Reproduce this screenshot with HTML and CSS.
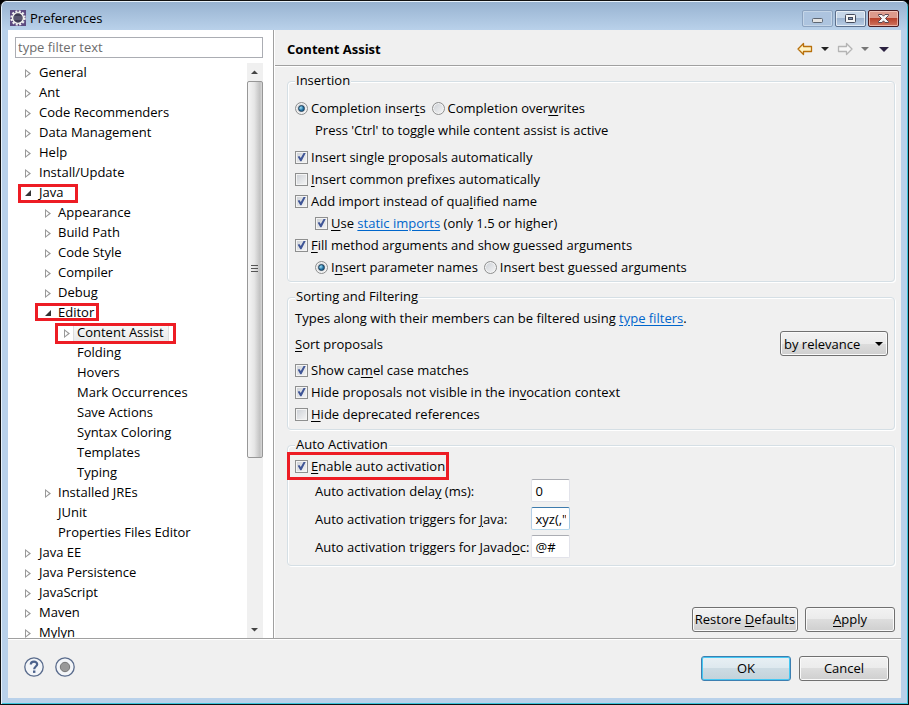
FILE: index.html
```html
<!DOCTYPE html>
<html lang="en">

<head>
    <meta charset="utf-8">
    <title>Preferences</title>
    <link rel="stylesheet" href="styles.css">
</head>

<body>
    <div class="window">
        <div class="title-bar">
            <svg class="app-icon" width="16" height="16" viewBox="0 0 16 16">
                <rect width="16" height="16" fill="#5d4a80"/>
                <circle cx="8" cy="8" r="6.5" fill="none" stroke="#eee" stroke-width="2.4" stroke-dasharray="2 1.4"/>
                <circle cx="8" cy="8" r="5.4" fill="#3e3a52" stroke="#f4f4f0" stroke-width="1.4"/>
                <path d="M4 7h8M4 9h8" stroke="#77738c"/>
            </svg>
            <span class="title">Preferences</span>
            <div class="window-buttons">
                <button type="button" class="win-btn win-min" aria-label="Minimize">
                    <svg width="29" height="15"><rect x="9.500" y="7.500" width="10" height="4" rx="1" fill="#e4e4e4" stroke="#5d6672"/></svg>
                </button>
                <button type="button" class="win-btn" aria-label="Maximize">
                    <svg width="29" height="15"><rect x="9.500" y="3.500" width="10" height="8" rx="1" fill="#f5f5f5" stroke="#454b5c"/><rect x="12.500" y="6.500" width="4" height="2" fill="#7f95b5" stroke="#454b5c"/></svg>
                </button>
                <button type="button" class="win-btn win-close" aria-label="Close">
                    <svg width="29" height="15"><path d="M9.500 3.500h3.500l1.500 1.700 1.500-1.700h3.500v1l-3 3 3 3v1h-3.500l-1.500-1.700-1.500 1.700H9.500v-1l3-3-3-3z" fill="#f5f5f5" stroke="#5a4650"/></svg>
                </button>
            </div>
        </div>

        <div class="client">
            <div class="main">
                <div class="sidebar">
                    <input type="text" class="filter" placeholder="type filter text" aria-label="Filter">
                    <div class="tree-area">
                        <ul class="tree">
                            <li class="closed"><span>General</span></li>
                            <li class="closed"><span>Ant</span></li>
                            <li class="closed"><span>Code Recommenders</span></li>
                            <li class="closed"><span>Data Management</span></li>
                            <li class="closed"><span>Help</span></li>
                            <li class="closed"><span>Install/Update</span></li>
                            <li class="open"><span>Java</span><i class="mark mark-java"></i>
                                <ul>
                                    <li class="closed"><span>Appearance</span></li>
                                    <li class="closed"><span>Build Path</span></li>
                                    <li class="closed"><span>Code Style</span></li>
                                    <li class="closed"><span>Compiler</span></li>
                                    <li class="closed"><span>Debug</span></li>
                                    <li class="open"><span>Editor</span><i class="mark mark-editor"></i>
                                        <ul>
                                            <li class="closed"><span class="selected">Content Assist</span><i class="mark mark-assist"></i></li>
                                            <li><span>Folding</span></li>
                                            <li><span>Hovers</span></li>
                                            <li><span>Mark Occurrences</span></li>
                                            <li><span>Save Actions</span></li>
                                            <li><span>Syntax Coloring</span></li>
                                            <li><span>Templates</span></li>
                                            <li><span>Typing</span></li>
                                        </ul>
                                    </li>
                                    <li class="closed"><span>Installed JREs</span></li>
                                    <li><span>JUnit</span></li>
                                    <li><span>Properties Files Editor</span></li>
                                </ul>
                            </li>
                            <li class="closed"><span>Java EE</span></li>
                            <li class="closed"><span>Java Persistence</span></li>
                            <li class="closed"><span>JavaScript</span></li>
                            <li class="closed"><span>Maven</span></li>
                            <li class="closed"><span>Mylyn</span></li>
                        </ul>
                        <div class="scrollbar">
                            <svg class="scroll-arrow" width="15" height="18"><path d="M4 11L7.500 7.500 11 11z" fill="#444"/></svg>
                            <div class="scroll-thumb">
                                <svg width="7" height="8"><path d="M0 .5h7M0 3.500h7M0 6.500h7" stroke="#555"/></svg>
                            </div>
                            <div class="scroll-track"></div>
                            <svg class="scroll-arrow" width="15" height="18"><path d="M4 8h7L7.500 11.500z" fill="#444"/></svg>
                        </div>
                    </div>
                </div>

                <div class="page">
                    <div class="page-header">
                        <h1>Content Assist</h1>
                        <div class="nav">
                            <button type="button" class="nav-btn" aria-label="Back">
                                <svg width="16" height="14"><path d="M1 7L6.500 1.500V4.500H14.500V9.500H6.500V12.500z" fill="#fff3c4" stroke="#b8700c" stroke-width="1.300" stroke-linejoin="round"/></svg>
                            </button>
                            <button type="button" class="nav-btn" aria-label="Back history">
                                <svg width="8" height="14"><path d="M0 5h8L4 9z" fill="#222"/></svg>
                            </button>
                            <button type="button" class="nav-btn" aria-label="Forward">
                                <svg width="16" height="14"><path d="M15 7L9.500 1.500V4.500H1.500V9.500H9.500V12.500z" fill="#f6f6f6" stroke="#b4b4b4" stroke-width="1.300" stroke-linejoin="round"/></svg>
                            </button>
                            <button type="button" class="nav-btn" aria-label="Forward history">
                                <svg width="8" height="14"><path d="M0 5h8L4 9z" fill="#777"/></svg>
                            </button>
                            <button type="button" class="nav-btn nav-menu" aria-label="Menu">
                                <svg width="10" height="14"><path d="M0 5h10L5 10z" fill="#2b2140"/></svg>
                            </button>
                        </div>
                    </div>

                    <form class="page-body">
                        <fieldset class="insertion">
                            <legend>Insertion</legend>
                            <div class="row">
                                <label><input type="radio" name="completion" checked>Completion inser<u>t</u>s</label>
                                <label><input type="radio" name="completion">Completion over<u>w</u>rites</label>
                            </div>
                            <p class="row indent note">Press 'Ctrl' to toggle while content assist is active</p>
                            <div class="row"><label><input type="checkbox" checked>Insert single <u>p</u>roposals automatically</label></div>
                            <div class="row"><label><input type="checkbox"><u>I</u>nsert common prefixes automatically</label></div>
                            <div class="row"><label><input type="checkbox" checked>Add import instead of qua<u>l</u>ified name</label></div>
                            <div class="row indent"><label><input type="checkbox" checked><u>U</u>se <a href="#">static imports</a> (only 1.5 or higher)</label></div>
                            <div class="row"><label><input type="checkbox" checked><u>F</u>ill method arguments and show guessed arguments</label></div>
                            <div class="row indent">
                                <label><input type="radio" name="fill" checked>I<u>n</u>sert parameter names</label>
                                <label><input type="radio" name="fill">Insert best <u>g</u>uessed arguments</label>
                            </div>
                        </fieldset>

                        <fieldset>
                            <legend>Sorting and Filtering</legend>
                            <p class="row">Types along with their members can be filtered using&nbsp;<a href="#">type filters</a>.</p>
                            <div class="row sort-row">
                                <label for="sort"><u>S</u>ort proposals</label>
                                <span class="select-wrap">
                                    <select id="sort">
                                        <option>by relevance</option>
                                        <option>alphabetically</option>
                                    </select>
                                </span>
                            </div>
                            <div class="row"><label><input type="checkbox" checked>Show ca<u>m</u>el case matches</label></div>
                            <div class="row"><label><input type="checkbox" checked>Hide proposals not visible in the in<u>v</u>ocation context</label></div>
                            <div class="row"><label><input type="checkbox"><u>H</u>ide deprecated references</label></div>
                        </fieldset>

                        <fieldset>
                            <legend>Auto Activation</legend>
                            <div class="row"><label class="marked"><input type="checkbox" checked><u>E</u>nable auto activation<i class="mark mark-enable"></i></label></div>
                            <div class="fields">
                                <label for="delay">Auto activation dela<u>y</u> (ms):</label>
                                <input type="text" id="delay" value="0">
                                <label for="java">Auto activation triggers for <u>J</u>ava:</label>
                                <input type="text" id="java" class="focused" value="xyz(,&quot;">
                                <label for="javadoc">Auto activation triggers for Javad<u>o</u>c:</label>
                                <input type="text" id="javadoc" value="@#">
                            </div>
                        </fieldset>

                        <div class="page-actions">
                            <button type="button" class="btn btn-wide">Restore <u>D</u>efaults</button>
                            <button type="button" class="btn"><u>A</u>pply</button>
                        </div>
                    </form>
                </div>
            </div>

            <div class="footer">
                <button type="button" class="round-btn" aria-label="Help">
                    <svg width="20" height="20"><circle cx="10" cy="10" r="9.200" fill="#f3f5f8" stroke="#596b8c" stroke-width="1.300"/><path d="M6.800 7.600C6.800 3.600 13.200 3.700 13.200 7.300C13.200 9.500 10.200 9.600 10.200 12.200" fill="none" stroke="#4c628c" stroke-width="2.200"/><rect x="9" y="13.500" width="2.400" height="2.400" fill="#4c628c"/></svg>
                </button>
                <button type="button" class="round-btn" aria-label="Record">
                    <svg width="20" height="20"><circle cx="10" cy="10" r="9.200" fill="#f3f5f8" stroke="#596b8c" stroke-width="1.300"/><circle cx="10" cy="10" r="4.700" fill="#999" stroke="#777"/></svg>
                </button>
                <div class="footer-actions">
                    <button type="button" class="btn btn-default">OK</button>
                    <button type="button" class="btn">Cancel</button>
                </div>
            </div>
        </div>
    </div>
</body>

</html>
```
FILE: styles.css
```css
* {
    box-sizing: border-box;
}

body {
    margin: 0;
    background-color: #000;
    font-family: "Open Sans", "Noto Sans", sans-serif;
    font-size: 13px;
    line-height: 18px;
    color: #000;
}

button,
input,
select {
    font: inherit;
    color: inherit;
    margin: 0;
}

svg {
    display: block;
}

u {
    text-underline-offset: 2px;
}

a {
    color: #0066cc;
    text-underline-offset: 2px;
}

.window {
    display: flex;
    flex-direction: column;
    height: 100vh;
    padding: 0 7px 6px 6px;
    border: 1px solid #111;
    border-radius: 7px 7px 0 0;
    background-color: #b9d1ea;
    box-shadow: inset 1px 1px #e8f2fb, inset -1px -1px #3cc5dc;
}

/* title bar */
.title-bar {
    display: flex;
    align-items: center;
    flex: none;
    height: 29px;
    margin: 0 -6px 0 -5px;
    padding: 5px 8px 0;
    background: linear-gradient(#e8f2fb 1px, #98b3d1 1px, #b9d1ea);
    border-radius: 6px 6px 0 0;
}

.title {
    flex: 1;
    margin-left: 4px;
}

.window-buttons {
    display: flex;
    gap: 2px;
}

.win-btn {
    width: 31px;
    height: 17px;
    padding: 0;
    border: 1px solid #5c6f8c;
    border-radius: 2px;
    background: linear-gradient(#c6d6e8 50%, #9db4d0 50%, #b9cee6);
    box-shadow: inset 0 0 0 1px rgba(255, 255, 255, 0.6);
}

.win-min {
    border-color: #8ca3c0;
    background: #adc4df;
    box-shadow: inset 0 0 0 1px rgba(255, 255, 255, 0.3);
}

.win-close {
    border-color: #4a1c22;
    background: linear-gradient(#dd9a8c 45%, #b8422c 50%, #cf7560);
    box-shadow: inset 0 0 0 1px rgba(255, 220, 210, 0.6);
}

.client {
    display: flex;
    flex-direction: column;
    flex: 1;
    min-height: 0;
    margin-left: 1px;
    background-color: #f0f0f0;
}

.main {
    display: flex;
    flex: 1;
    min-height: 0;
    border-bottom: 1px solid #a0a0a0;
    box-shadow: 0 1px #fff;
}

/* tree */
.sidebar {
    display: flex;
    flex-direction: column;
    width: 266px;
    padding: 7px 10px 0 7px;
    border-right: 1px solid #a0a0a0;
    background-color: #fff;
}

.filter {
    width: 100%;
    height: 21px;
    padding: 0 2px 2px;
    border: 1px solid #abadb3;
}

.filter::placeholder {
    color: #6d6d6d;
}

.tree-area {
    display: flex;
    flex: 1;
    min-height: 0;
    margin-top: 5px;
    overflow: hidden;
}

.tree {
    flex: 1;
    padding-left: 3px;
}

.tree,
.tree ul {
    margin: 0;
    list-style: none;
}

.tree ul {
    padding: 0;
}

.tree li {
    position: relative;
    padding-left: 19px;
}

.tree > li {
    padding-left: 21px;
}

.tree span {
    display: block;
    width: max-content;
    height: 20px;
}

/* expand arrows, drawn left of the item text */
.closed::before,
.open::before {
    content: "";
    position: absolute;
    top: 6px;
    left: 6px;
    width: 6px;
    height: 9px;
    background-color: #999;
    clip-path: polygon(evenodd, 0 0, 100% 50%, 0 100%, 0 0, 1px 2px, 1px 7px, 4px 50%, 1px 2px);
}

.tree > li::before {
    left: 7px;
}

.open::before {
    top: 7px;
    height: 6px;
    background-color: #333;
    clip-path: polygon(100% 0, 100% 100%, 0 100%);
}

.tree .selected {
    margin-left: -4px;
    padding: 0 4px 0 3px;
    border-left: 1px solid #ddd;
    border-right: 1px solid #ddd;
    background: linear-gradient(#fafafa, #e8e8e8);
}

/* red highlight frames over the content */
.mark {
    position: absolute;
    border: 3px solid #ed1c24;
    pointer-events: none;
}

.mark-java {
    top: 1px;
    left: 0;
    width: 60px;
    height: 19px;
}

.mark-editor {
    top: 0;
    left: -4px;
    width: 64px;
    height: 18px;
}

.mark-assist {
    top: 0;
    left: -3px;
    width: 121px;
    height: 21px;
}

.marked {
    position: relative;
}

.mark-enable {
    top: -5px;
    left: -8px;
    right: -4px;
    bottom: -5px;
}

.scrollbar {
    display: flex;
    flex-direction: column;
    width: 16px;
    background-color: #f0f0f0;
}

.scroll-thumb {
    display: flex;
    align-items: center;
    justify-content: center;
    flex: 376;
    padding-right: 2px;
    border: 1px solid #979797;
    border-radius: 2px;
    background: linear-gradient(90deg, #f5f5f5, #e6e6e6 45%, #c2c2c2 85%, #d8d8d8);
}

.scroll-track {
    flex: 163;
}

/* page */
.page {
    display: flex;
    flex-direction: column;
    flex: 1;
    min-width: 0;
    border-left: 1px solid #fff;
}

.page-header {
    display: flex;
    align-items: center;
    justify-content: space-between;
    height: 36px;
    padding: 2px 12px 0;
    border-bottom: 1px solid #a0a0a0;
    box-shadow: 0 1px #fff;
}

h1 {
    margin: 0;
    font-size: 13px;
    font-weight: bold;
}

.nav {
    display: flex;
    gap: 8px;
}

.nav-btn,
.round-btn {
    padding: 0;
    border: none;
    background: none;
}

.nav-menu {
    margin-left: 2px;
}

.page-body {
    display: flex;
    flex-direction: column;
    flex: 1;
    padding: 5px 6px 6px 12px;
}

fieldset {
    min-width: 0;
    margin: 0 0 5px;
    padding: 0 6px 4px 7px;
    border: 1px solid #d5dfe5;
    border-radius: 4px;
    box-shadow: inset 1px 1px #fff, 1px 1px #fff;
}

.insertion {
    padding-top: 6px;
    padding-bottom: 3px;
}

legend {
    padding: 0 1px;
    height: 20px;
    background-color: #f0f0f0;
}

.row {
    display: flex;
    align-items: center;
    gap: 6px;
    height: 22px;
    margin: 0;
    padding-bottom: 1px;
}

p.row {
    gap: 0;
}

.row label {
    white-space: nowrap;
}

.indent {
    padding-left: 20px;
}

.note {
    margin-bottom: 5px;
}

input[type="checkbox"],
input[type="radio"] {
    appearance: none;
    position: relative;
    width: 13px;
    height: 13px;
    margin-right: 3px;
    vertical-align: -2px;
    border: 1px solid #8e8f8f;
    background: linear-gradient(135deg, #cbcfd5, #f6f6f6);
    box-shadow: inset 0 0 0 1px #f4f4f4;
}

input[type="radio"] {
    border-radius: 50%;
}

input[type="checkbox"]:checked::after {
    content: "";
    position: absolute;
    inset: 1px;
    background-color: #3f5596;
    clip-path: polygon(8% 48%, 26% 40%, 42% 62%, 76% 0, 98% 4%, 50% 98%, 36% 98%);
}

input[type="radio"]:checked::after {
    content: "";
    position: absolute;
    inset: 2px;
    border: 1px solid #1d3c55;
    border-radius: 50%;
    background: radial-gradient(circle at 35% 35%, #9fe0f8, #1c6a9c 60%);
}

.sort-row {
    justify-content: space-between;
    height: 30px;
}

.select-wrap {
    position: relative;
}

.select-wrap::after {
    content: "";
    position: absolute;
    top: 11px;
    right: 5px;
    width: 8px;
    height: 4px;
    background-color: #000;
    clip-path: polygon(0 0, 100% 0, 50% 100%);
    pointer-events: none;
}

select,
.btn {
    height: 25px;
    border: 1px solid #707070;
    border-radius: 3px;
    background: linear-gradient(#f2f2f2, #ebebeb 50%, #dddddd 50%, #cfcfcf);
    box-shadow: inset 0 0 0 1px #fafafa;
}

select {
    display: block;
    appearance: none;
    width: 108px;
    padding: 0 3px;
}

.btn {
    width: 90px;
    padding: 0 0 1px;
}

.btn-wide {
    width: 106px;
}

.btn-default {
    border-color: #3c7fb1;
    background: linear-gradient(#e8f0f4, #dde8ee 50%, #ccdbe3 50%, #c3d2da);
    box-shadow: inset 0 0 0 1px #45c8f3;
}

.fields {
    display: grid;
    grid-template-columns: max-content 39px;
    align-items: center;
    gap: 5px 2px;
    padding: 2px 0 3px 20px;
}

.fields input {
    height: 23px;
    padding: 0 3px;
    border: 1px solid #e2e3ea;
    border-top-color: #abadb3;
    border-radius: 2px;
    background-color: #fff;
}

.fields .focused {
    border-color: #3d7bad #a4c9e3 #b7d9ed #b5cfe7;
}

.page-actions {
    display: flex;
    justify-content: flex-end;
    gap: 7px;
    margin-top: auto;
}

/* footer */
.footer {
    display: flex;
    align-items: center;
    gap: 11px;
    height: 59px;
    padding: 0 12px 0 16px;
}

.round-btn {
    margin-bottom: 3px;
}

.footer-actions {
    display: flex;
    gap: 8px;
    margin-left: auto;
}
```
